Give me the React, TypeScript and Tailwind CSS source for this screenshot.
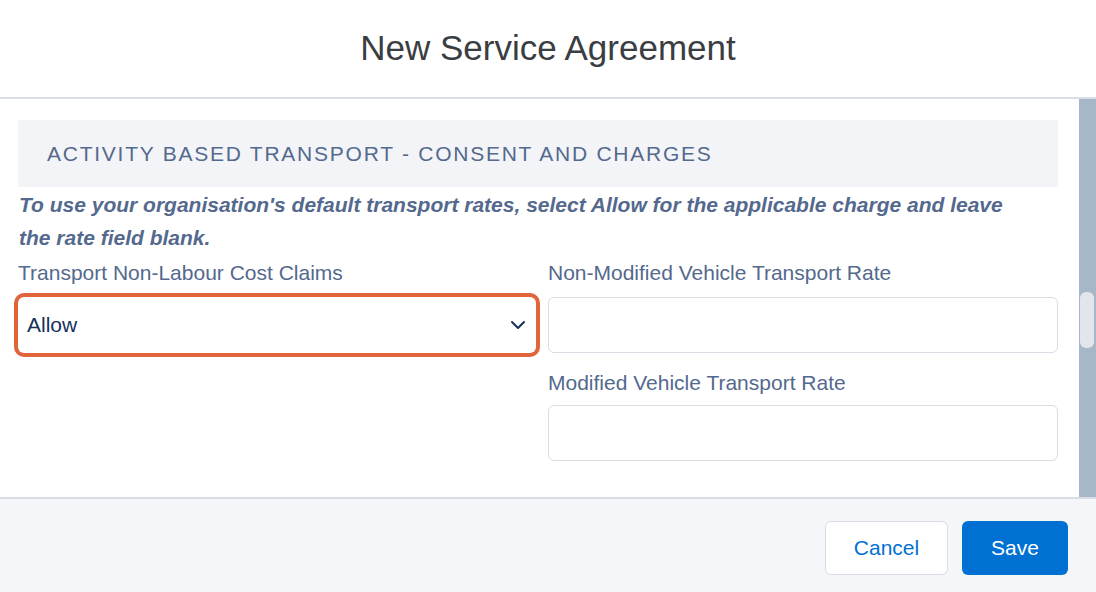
import React from 'react';

const font = { fontFamily: '"Liberation Sans", Arial, sans-serif' };

function Field({ label, children }: { label: string; children: React.ReactNode }) {
  return (
    <div className="flex flex-col">
      <label className="text-[21px] leading-[24px] text-[#54698d]">{label}</label>
      {children}
    </div>
  );
}

export default function App() {
  return (
    <div className="w-[1096px] h-[592px] flex flex-col bg-white overflow-hidden" style={font}>
      {/* Header */}
      <header className="h-[99px] shrink-0 flex items-center justify-center border-b-2 border-[#d8dde6]">
        <h1 className="text-[35px] leading-none text-[#3a3d42] -mt-[2px]">New Service Agreement</h1>
      </header>

      {/* Body */}
      <div className="flex flex-1 min-h-0">
        <div className="flex-1 pl-[18px] pr-[21px] pt-[21px]">
          <div className="h-[67px] bg-[#f3f4f8] flex items-center pl-[29px]">
            <h2 className="text-[21px] uppercase tracking-[1.75px] text-[#54698d]">
              Activity Based Transport - Consent and Charges
            </h2>
          </div>

          <p className="mt-[1px] ml-[1px] max-w-[1000px] text-[21px] leading-[33px] font-bold italic text-[#54698d]">
            To use your organisation's default transport rates, select Allow for the applicable charge and leave the
            rate field blank.
          </p>

          <div className="grid grid-cols-[518px_510px] gap-x-3 mt-[7px]">
            <Field label="Transport Non-Labour Cost Claims">
              <div className="mt-[12px] h-[56px] rounded-[6px] bg-white ring-4 ring-[#e0653b] flex items-center justify-between pl-[9px] pr-[10px]">
                <span className="text-[21px] text-[#16325c]">Allow</span>
                <svg width="16" height="10" viewBox="0 0 16 10" fill="none">
                  <path d="M2 2l6 6 6-6" stroke="#16325c" strokeWidth="2" strokeLinecap="round" strokeLinejoin="round" />
                </svg>
              </div>
            </Field>
            <div className="flex flex-col gap-[18px]">
              <Field label="Non-Modified Vehicle Transport Rate">
                <input className="mt-[12px] h-[56px] rounded-[6px] border border-[#d8dde6] bg-white outline-none" />
              </Field>
              <Field label="Modified Vehicle Transport Rate">
                <input className="mt-[10px] h-[56px] rounded-[6px] border border-[#d8dde6] bg-white outline-none" />
              </Field>
            </div>
          </div>
        </div>

        {/* Scrollbar */}
        <div className="w-[17px] shrink-0 bg-[#a8b7c7] pt-[193px] pl-[1px] pr-[2px]">
          <div className="h-[56px] rounded-[6px] bg-[#e0e5ee]" />
        </div>
      </div>

      {/* Footer */}
      <footer className="h-[95px] shrink-0 border-t-2 border-[#d8dde6] bg-[#f4f6f9] flex items-start justify-end gap-[14px] pt-[22px] pr-[28px]">
        <button className="w-[123px] h-[54px] rounded-[6px] border border-[#d8dde6] bg-white text-[21px] text-[#0070d2]">
          Cancel
        </button>
        <button className="w-[106px] h-[54px] rounded-[6px] bg-[#0070d2] text-[21px] text-white">
          Save
        </button>
      </footer>
    </div>
  );
}
